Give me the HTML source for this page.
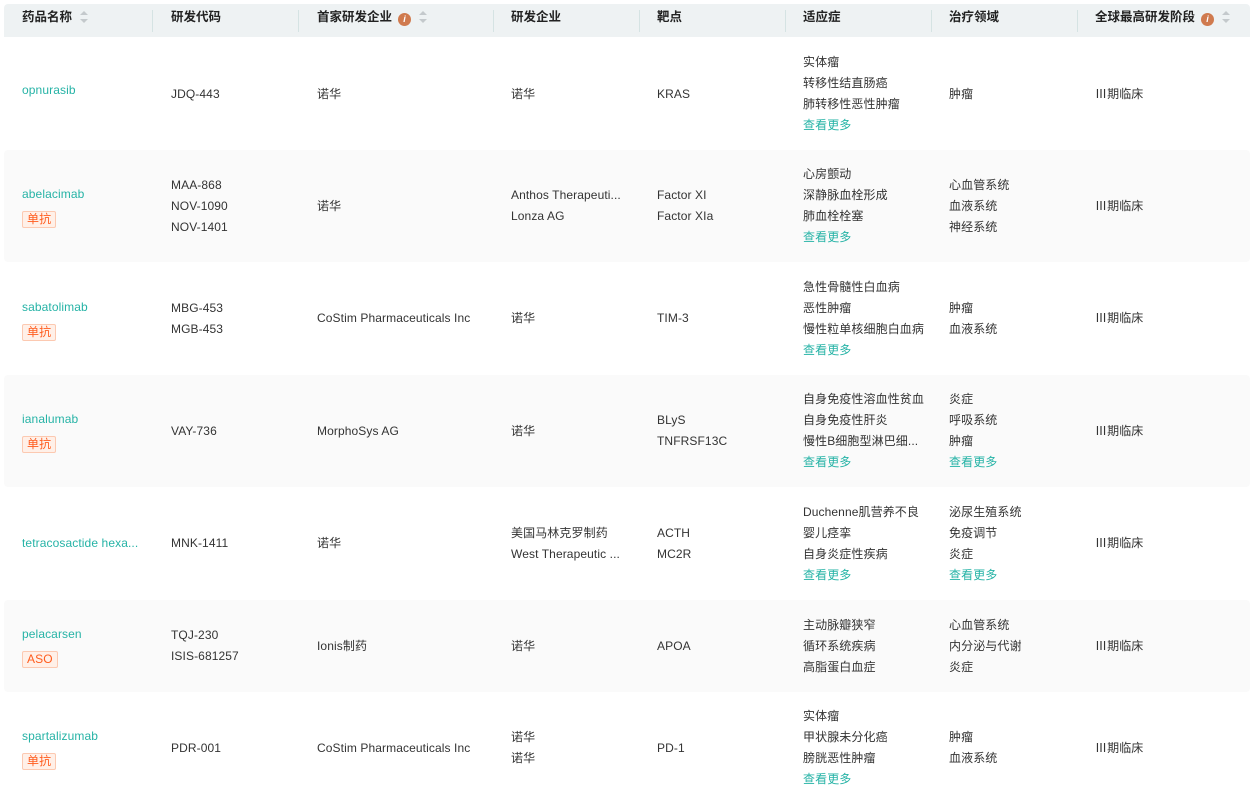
<!DOCTYPE html>
<html><head><meta charset="utf-8"><style>
*{margin:0;padding:0;box-sizing:border-box}
body{width:1250px;height:795px;overflow:hidden;background:#fff;font-family:"Liberation Sans","Noto Sans CJK SC",sans-serif;font-size:12px;color:#333}
.hdr{position:absolute;left:4px;top:4px;width:1246px;height:33px;background:#eef2f3;border-radius:4px 4px 0 0}
.h{position:absolute;top:0;height:33px;line-height:27px;font-weight:bold;font-size:12.5px;color:#222;white-space:nowrap}
.sep{position:absolute;top:6px;width:1px;height:22px;background:#d5e3e3}
.info{display:inline-block;width:13px;height:13px;border-radius:50%;background:#d07a4e;color:#fff;font-size:9px;line-height:13px;text-align:center;font-style:italic;font-weight:bold;vertical-align:-1px;margin-left:6px}
.sort{display:inline-block;vertical-align:-2px;margin-left:8px}
.row{position:absolute;left:4px;width:1246px}
.row.alt{background:#fafafa;border-radius:4px}
.c{position:absolute;top:0;height:100%;display:flex;flex-direction:column;justify-content:center;line-height:21px;white-space:nowrap;letter-spacing:0.1px}
.t{color:#26b3a6}
.tag{display:inline-block;margin-top:6px;height:17px;line-height:15px;padding:0 4px;border:1px solid #fcc9b1;background:#fff0e8;color:#ff5c1e;border-radius:2px;font-size:12px;align-self:flex-start}
.more{color:#26b3a6}
</style></head><body>
<div class="hdr">
<div class="h" style="left:18px">药品名称<svg class="sort" width="8" height="12"><path d="M4 0L8 4H0z" fill="#c4c9cc"/><path d="M4 12L8 8H0z" fill="#c4c9cc"/></svg></div>
<div class="sep" style="left:148px"></div>
<div class="h" style="left:167px">研发代码</div>
<div class="sep" style="left:294px"></div>
<div class="h" style="left:313px">首家研发企业<span class="info">i</span><svg class="sort" width="8" height="12"><path d="M4 0L8 4H0z" fill="#c4c9cc"/><path d="M4 12L8 8H0z" fill="#c4c9cc"/></svg></div>
<div class="sep" style="left:489px"></div>
<div class="h" style="left:507px">研发企业</div>
<div class="sep" style="left:635px"></div>
<div class="h" style="left:653px">靶点</div>
<div class="sep" style="left:781px"></div>
<div class="h" style="left:799px">适应症</div>
<div class="sep" style="left:927px"></div>
<div class="h" style="left:945px">治疗领域</div>
<div class="sep" style="left:1073px"></div>
<div class="h" style="left:1091px">全球最高研发阶段<span class="info">i</span><svg class="sort" width="8" height="12"><path d="M4 0L8 4H0z" fill="#c4c9cc"/><path d="M4 12L8 8H0z" fill="#c4c9cc"/></svg></div>
</div>

<div class="row" style="top:38px;height:112px">
<div class="c" style="left:18px"><span class="t" style="margin-bottom:8px">opnurasib</span></div>
<div class="c" style="left:167px">JDQ-443</div>
<div class="c" style="left:313px">诺华</div>
<div class="c" style="left:507px">诺华</div>
<div class="c" style="left:653px">KRAS</div>
<div class="c" style="left:799px"><span>实体瘤</span><span>转移性结直肠癌</span><span>肺转移性恶性肿瘤</span><span class="more">查看更多</span></div>
<div class="c" style="left:945px">肿瘤</div>
<div class="c" style="left:1091px">Ⅲ期临床</div>
</div>

<div class="row alt" style="top:150px;height:112px">
<div class="c" style="left:18px"><span class="t">abelacimab</span><span class="tag">单抗</span></div>
<div class="c" style="left:167px"><span>MAA-868</span><span>NOV-1090</span><span>NOV-1401</span></div>
<div class="c" style="left:313px">诺华</div>
<div class="c" style="left:507px"><span>Anthos Therapeuti...</span><span>Lonza AG</span></div>
<div class="c" style="left:653px"><span>Factor XI</span><span>Factor XIa</span></div>
<div class="c" style="left:799px"><span>心房颤动</span><span>深静脉血栓形成</span><span>肺血栓栓塞</span><span class="more">查看更多</span></div>
<div class="c" style="left:945px"><span>心血管系统</span><span>血液系统</span><span>神经系统</span></div>
<div class="c" style="left:1091px">Ⅲ期临床</div>
</div>

<div class="row" style="top:262px;height:113px">
<div class="c" style="left:18px"><span class="t">sabatolimab</span><span class="tag">单抗</span></div>
<div class="c" style="left:167px"><span>MBG-453</span><span>MGB-453</span></div>
<div class="c" style="left:313px">CoStim Pharmaceuticals Inc</div>
<div class="c" style="left:507px">诺华</div>
<div class="c" style="left:653px">TIM-3</div>
<div class="c" style="left:799px"><span>急性骨髓性白血病</span><span>恶性肿瘤</span><span>慢性粒单核细胞白血病</span><span class="more">查看更多</span></div>
<div class="c" style="left:945px"><span>肿瘤</span><span>血液系统</span></div>
<div class="c" style="left:1091px">Ⅲ期临床</div>
</div>

<div class="row alt" style="top:375px;height:112px">
<div class="c" style="left:18px"><span class="t">ianalumab</span><span class="tag">单抗</span></div>
<div class="c" style="left:167px">VAY-736</div>
<div class="c" style="left:313px">MorphoSys AG</div>
<div class="c" style="left:507px">诺华</div>
<div class="c" style="left:653px"><span>BLyS</span><span>TNFRSF13C</span></div>
<div class="c" style="left:799px"><span>自身免疫性溶血性贫血</span><span>自身免疫性肝炎</span><span>慢性B细胞型淋巴细...</span><span class="more">查看更多</span></div>
<div class="c" style="left:945px"><span>炎症</span><span>呼吸系统</span><span>肿瘤</span><span class="more">查看更多</span></div>
<div class="c" style="left:1091px">Ⅲ期临床</div>
</div>

<div class="row" style="top:487px;height:113px">
<div class="c" style="left:18px"><span class="t">tetracosactide hexa...</span></div>
<div class="c" style="left:167px">MNK-1411</div>
<div class="c" style="left:313px">诺华</div>
<div class="c" style="left:507px"><span>美国马林克罗制药</span><span>West Therapeutic ...</span></div>
<div class="c" style="left:653px"><span>ACTH</span><span>MC2R</span></div>
<div class="c" style="left:799px"><span>Duchenne肌营养不良</span><span>婴儿痉挛</span><span>自身炎症性疾病</span><span class="more">查看更多</span></div>
<div class="c" style="left:945px"><span>泌尿生殖系统</span><span>免疫调节</span><span>炎症</span><span class="more">查看更多</span></div>
<div class="c" style="left:1091px">Ⅲ期临床</div>
</div>

<div class="row alt" style="top:600px;height:92px">
<div class="c" style="left:18px"><span class="t">pelacarsen</span><span class="tag">ASO</span></div>
<div class="c" style="left:167px"><span>TQJ-230</span><span>ISIS-681257</span></div>
<div class="c" style="left:313px">Ionis制药</div>
<div class="c" style="left:507px">诺华</div>
<div class="c" style="left:653px">APOA</div>
<div class="c" style="left:799px"><span>主动脉瓣狭窄</span><span>循环系统疾病</span><span>高脂蛋白血症</span></div>
<div class="c" style="left:945px"><span>心血管系统</span><span>内分泌与代谢</span><span>炎症</span></div>
<div class="c" style="left:1091px">Ⅲ期临床</div>
</div>

<div class="row" style="top:692px;height:112px">
<div class="c" style="left:18px"><span class="t">spartalizumab</span><span class="tag">单抗</span></div>
<div class="c" style="left:167px">PDR-001</div>
<div class="c" style="left:313px">CoStim Pharmaceuticals Inc</div>
<div class="c" style="left:507px"><span>诺华</span><span>诺华</span></div>
<div class="c" style="left:653px">PD-1</div>
<div class="c" style="left:799px"><span>实体瘤</span><span>甲状腺未分化癌</span><span>膀胱恶性肿瘤</span><span class="more">查看更多</span></div>
<div class="c" style="left:945px"><span>肿瘤</span><span>血液系统</span></div>
<div class="c" style="left:1091px">Ⅲ期临床</div>
</div>
</body></html>
